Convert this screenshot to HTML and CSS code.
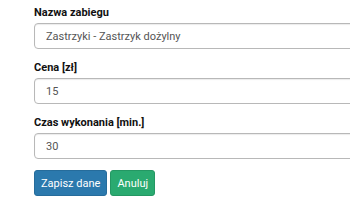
FILE: index.html
```html
<!DOCTYPE html>
<html lang="pl">
  <head>
    <meta charset="UTF-8" />
    <meta name="viewport" content="width=device-width, initial-scale=1.0" />
    <title>Edycja zabiegu</title>
    <link rel="stylesheet" href="styles.css">
  </head>
  <body>
    <form class="treatment-form">
      <div class="form-group">
        <label for="name">Nazwa zabiegu</label>
        <input type="text" id="name" class="form-control" value="Zastrzyki - Zastrzyk dożylny" />
      </div>
      <div class="form-group">
        <label for="price">Cena [zł]</label>
        <input type="text" id="price" class="form-control" value="15" />
      </div>
      <div class="form-group">
        <label for="time">Czas wykonania [min.]</label>
        <input type="text" id="time" class="form-control" value="30" />
      </div>
      <div class="buttons">
        <button type="submit" class="btn btn-primary">Zapisz dane</button>
        <button type="button" class="btn btn-success">Anuluj</button>
      </div>
    </form>
  </body>
</html>
```

FILE: styles.css
```css
body {
  font-family: Roboto, "Liberation Sans", Arial, sans-serif;
  margin: 0;
  padding: 0;
  background-color: #fff;
  overflow: hidden;
}

.treatment-form {
  padding: 5px 0 0 34px;
  width: 340px;
}

.form-group {
  margin-bottom: 11px;
}

.form-group label {
  display: block;
  font-size: 11px;
  font-weight: bold;
  line-height: 15px;
  color: #111;
  margin-bottom: 3px;
}

.form-control {
  display: block;
  box-sizing: border-box;
  width: 100%;
  height: 26px;
  padding: 0 11px;
  font-family: inherit;
  font-size: 11px;
  color: #555;
  background-color: #fff;
  border: 1px solid #b8b8b8;
  border-radius: 4px;
  box-shadow: inset 0 1px 1px rgba(0, 0, 0, 0.08);
}

.buttons {
  display: flex;
  gap: 3px;
}

.btn {
  height: 26px;
  padding: 0 6px;
  font-family: inherit;
  font-size: 11px;
  color: white;
  border: 1px solid transparent;
  border-radius: 3px;
  cursor: pointer;
}

.btn-primary {
  background-color: #2b79ad;
  border-color: #266c9b;
}

.btn-success {
  background-color: #2aaa70;
  border-color: #249763;
}
```
